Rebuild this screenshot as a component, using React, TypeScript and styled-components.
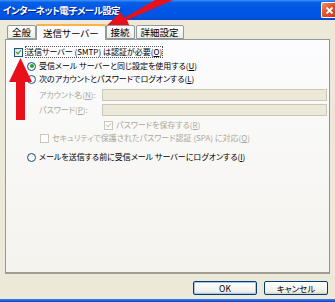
import React from 'react'
import styled, { createGlobalStyle } from 'styled-components'

const GlobalStyle = createGlobalStyle`
  html, body {
    margin: 0;
    padding: 0;
    background: #ece9d8;
  }
  body {
    font-family: "Noto Sans CJK JP", "Noto Sans", sans-serif;
  }
`

const App = () => {
  return (
    <>
      <GlobalStyle />
      <Window>
        <TitleBar>
          <Title>インターネット電子メール設定</Title>
          <CloseButton>
            <svg width="9" height="9" viewBox="0 0 9 9">
              <path d="M1.5 1.5 L7.5 7.5 M7.5 1.5 L1.5 7.5" stroke="#fff" strokeWidth="1.8" />
            </svg>
          </CloseButton>
        </TitleBar>
        <Body>
          <TabRow>
            <Tab>全般</Tab>
            <Tab active>送信サーバー</Tab>
            <Tab>接続</Tab>
            <Tab>詳細設定</Tab>
          </TabRow>
          <Panel>
            <Row indent={8} top={7}>
              <CheckBox checked />
              <Label focus>送信サーバー (SMTP) は認証が必要(<U>O</U>)</Label>
            </Row>
            <Row indent={21} top={4}>
              <Radio checked />
              <Label>受信メール サーバーと同じ設定を使用する(<U>U</U>)</Label>
            </Row>
            <Row indent={21} top={3}>
              <Radio />
              <Label>次のアカウントとパスワードでログオンする(<U>L</U>)</Label>
            </Row>
            <FieldRow top={5}>
              <FieldLabel>アカウント名(<U>N</U>):</FieldLabel>
              <TextBox />
            </FieldRow>
            <FieldRow top={3}>
              <FieldLabel>パスワード(<U>P</U>):</FieldLabel>
              <TextBox />
            </FieldRow>
            <Row indent={98} top={4}>
              <CheckBox checked disabled />
              <Label disabled>パスワードを保存する(<U>R</U>)</Label>
            </Row>
            <Row indent={34} top={3}>
              <CheckBox disabled />
              <Label disabled>セキュリティで保護されたパスワード認証 (SPA) に対応(<U>Q</U>)</Label>
            </Row>
            <Row indent={21} top={9}>
              <Radio />
              <Label>メールを送信する前に受信メール サーバーにログオンする(<U>I</U>)</Label>
            </Row>
          </Panel>
          <ButtonBar>
            <Button primary>OK</Button>
            <Button>キャンセル</Button>
          </ButtonBar>
        </Body>
        <BottomEdge />
        <Arrows width="335" height="302" viewBox="0 0 335 302">
          <path d="M173 0 L127 20 L130 27 L103 29 L121 12 L124 18 L169 -8 Z" fill="#e8101a" />
          <path d="M16 120 L16 82 L9 82 L20.5 58 L32 82 L25 82 L25 120 Z" fill="#e8101a" />
        </Arrows>
      </Window>
    </>
  )
}

const Window = styled.div`
  position: relative;
  width: 335px;
  height: 302px;
  overflow: hidden;
  display: flex;
  flex-direction: column;
  background: #ece9d8;
  color: #000;
  font-size: 8px;
  line-height: 10px;
  font-feature-settings: "palt";
`
const TitleBar = styled.div`
  height: 20px;
  flex: none;
  display: flex;
  align-items: center;
  justify-content: space-between;
  padding: 0 0 0 3px;
  background: linear-gradient(to bottom, #3d95ff 0%, #0a5fe6 12%, #0055e5 45%, #0054e3 85%, #0846c8 100%);
`
const Title = styled.span`
  color: #fff;
  font-weight: bold;
  font-size: 9.5px;
  letter-spacing: -0.6px;
  text-shadow: 1px 1px 0 #0a1f80;
`
const CloseButton = styled.div`
  width: 14px;
  height: 14px;
  margin-right: -1px;
  border: 1px solid #fff;
  border-right: none;
  border-radius: 2px 0 0 2px;
  background: linear-gradient(135deg, #f0946c 0%, #e2512c 45%, #c93d1a 100%);
  display: flex;
  align-items: center;
  justify-content: center;
`
const Body = styled.div`
  flex: 1;
  display: flex;
  flex-direction: column;
  padding: 2px 5px 0 5px;
`
const TabRow = styled.div`
  display: flex;
  align-items: flex-end;
  height: 17px;
  padding-left: 2px;
  position: relative;
  z-index: 1;
`
const Tab = styled.div<{ active?: boolean }>`
  height: ${p => (p.active ? 16 : 14)}px;
  margin-bottom: ${p => (p.active ? -1 : 0)}px;
  margin-right: ${p => (p.active ? 0 : 1)}px;
  margin-left: ${p => (p.active ? -1 : 0)}px;
  padding: 0 ${p => (p.active ? 6 : 4)}px;
  box-sizing: border-box;
  display: flex;
  align-items: center;
  font-size: 9.5px;
  border: 1px solid #919b9c;
  border-bottom: ${p => (p.active ? 'none' : '1px solid #919b9c')};
  border-top: ${p => (p.active ? '2px solid #f8b449' : '1px solid #919b9c')};
  border-radius: 2px 2px 0 0;
  background: ${p => (p.active ? '#fcfcfe' : 'linear-gradient(to bottom, #ffffff, #ecebe5)')};
`
const Panel = styled.div`
  height: 235px;
  box-sizing: border-box;
  border: 1px solid #919b9c;
  border-right-color: #8b9596;
  border-bottom: 2px solid #9f9d94;
  background: linear-gradient(to bottom, #fcfcfe, #f4f3ee);
  display: flex;
  flex-direction: column;
`
const Row = styled.div<{ indent: number; top: number }>`
  display: flex;
  align-items: center;
  gap: 3px;
  height: 10px;
  margin-top: ${p => p.top}px;
  padding-left: ${p => p.indent}px;
`
const FieldRow = styled.div<{ top: number }>`
  display: flex;
  align-items: center;
  margin-top: ${p => p.top}px;
  padding-left: 33px;
  padding-right: 2px;
`
const FieldLabel = styled.span`
  width: 63px;
  flex: none;
  color: #aca899;
  white-space: nowrap;
`
const TextBox = styled.div`
  flex: 1;
  height: 12px;
  box-sizing: border-box;
  border: 1px solid #c9c7ba;
  background: #ece9d8;
`
const Label = styled.span<{ disabled?: boolean; focus?: boolean }>`
  white-space: nowrap;
  color: ${p => (p.disabled ? '#aca899' : '#000')};
  outline: ${p => (p.focus ? '1px dotted #555' : 'none')};
`
const U = styled.span`
  text-decoration: underline;
`
const CheckBox = styled.span<{ checked?: boolean; disabled?: boolean }>`
  width: 9px;
  height: 9px;
  flex: none;
  box-sizing: border-box;
  border: 1px solid ${p => (p.disabled ? '#cac8bb' : '#1c5180')};
  background: ${p => (p.disabled ? '#fdfdfd' : 'linear-gradient(135deg, #dcdcd6, #fff)')};
  position: relative;
  &::after {
    content: '';
    display: ${p => (p.checked ? 'block' : 'none')};
    position: absolute;
    left: 2px;
    top: 0px;
    width: 2px;
    height: 4px;
    border: solid ${p => (p.disabled ? '#cac8bb' : '#21a121')};
    border-width: 0 1.5px 1.5px 0;
    transform: rotate(40deg);
  }
`
const Radio = styled.span<{ checked?: boolean }>`
  width: 9px;
  height: 9px;
  flex: none;
  box-sizing: border-box;
  border-radius: 50%;
  border: 1px solid #1c5180;
  background: radial-gradient(circle at 65% 65%, #fff 20%, #dcdcd6 100%);
  display: flex;
  align-items: center;
  justify-content: center;
  &::after {
    content: '';
    display: ${p => (p.checked ? 'block' : 'none')};
    width: 4px;
    height: 4px;
    border-radius: 50%;
    background: #2fa12f;
  }
`
const ButtonBar = styled.div`
  display: flex;
  justify-content: flex-end;
  gap: 7px;
  margin-top: 7px;
  padding-right: 2px;
`
const Button = styled.div<{ primary?: boolean }>`
  width: 64px;
  height: 14px;
  box-sizing: border-box;
  border: 1px solid #003c74;
  border-radius: 2px;
  background: linear-gradient(to bottom, #ffffff, #f0f0ea 80%, #d6d0c5);
  box-shadow: ${p => (p.primary ? 'inset 0 0 0 1px #a8c4f0' : 'none')};
  display: flex;
  align-items: center;
  justify-content: center;
  font-size: 8.5px;
`
const BottomEdge = styled.div`
  position: absolute;
  left: 0;
  right: 0;
  bottom: 0;
  height: 3px;
  background: linear-gradient(to bottom, #3c7ff0, #0842c8);
`
const Arrows = styled.svg`
  position: absolute;
  left: 0;
  top: 0;
  pointer-events: none;
`

export default App
